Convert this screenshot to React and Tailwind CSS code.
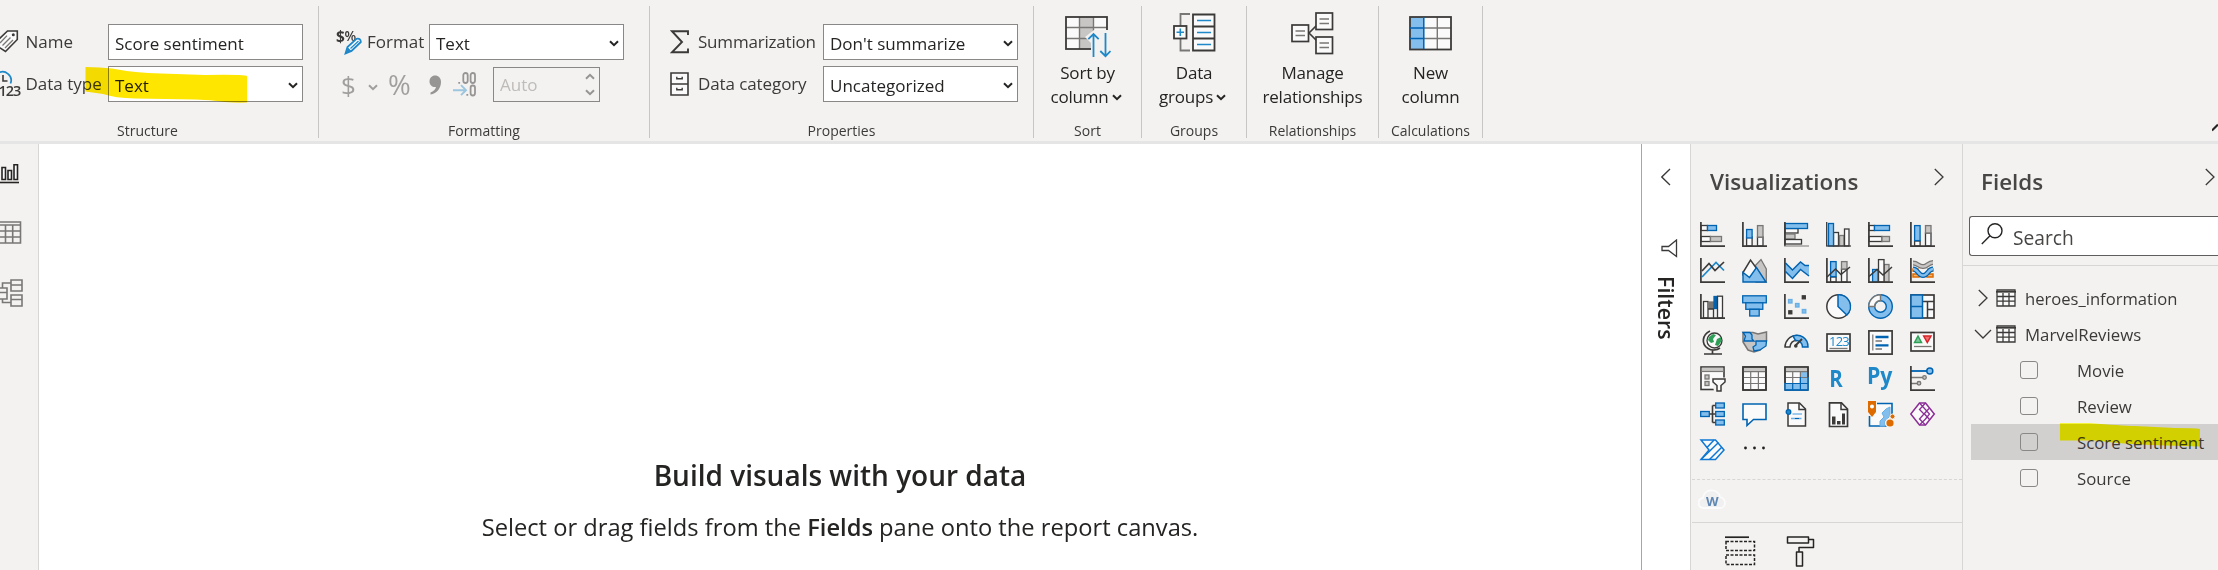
import React from "react";

const DK = "#3b3a39";
const BF = "#83beec";
const BS = "#0063b1";
const GF = "#c8c6c4";
const GS = "#797775";
const W = "#fafafa";
const SKY = "#1e88c9";

/* ---------- small helpers ---------- */
const B = ({ x, y, w, h, f = W, s = DK, t = 1.3 }) => (
  <rect x={x} y={y} width={w} height={h} fill={f} stroke={s} strokeWidth={t} />
);
const L = ({ d, s = DK, t = 1.5, f = "none" }) => (
  <path d={d} stroke={s} strokeWidth={t} fill={f} />
);
const Axis = () => <L d="M.9 0V24.1H25" t={1.7} />;

const Chevron = ({ className = "" }) => (
  <svg className={className} width="10" height="7" viewBox="0 0 10 7">
    <path d="M1 1.2L5 5.2L9 1.2" fill="none" stroke="currentColor" strokeWidth="2" />
  </svg>
);

/* ---------- ribbon ---------- */
const Group = ({ label, width, children, labelClass = "" }) => (
  <section className={`mt-1.5 flex h-[132px] shrink-0 flex-col border-r border-[#c8c6c4] ${width}`}>
    <div className="h-[117px] shrink-0">{children}</div>
    <div className={`shrink-0 text-center text-[14px] leading-[15px] text-[#3b3a39] ${labelClass}`}>{label}</div>
  </section>
);

const Field = ({ text, arrow, width = "w-[195px]" }) => (
  <div className={`flex h-9 items-center justify-between border border-[#8a8886] bg-white pr-1 pl-1.5 pt-[3px] text-[17px] leading-[30px] tracking-normal text-[#252423] ${width}`}>
    <span>{text}</span>
    {arrow && <Chevron />}
  </div>
);

const BigButton = ({ icon, a, b, arrow }) => (
  <div className="flex flex-col items-center pt-1 text-[17px] leading-[24px] tracking-[-0.2px] text-[#252423]">
    <div className="flex h-[51px] items-start justify-center">{icon}</div>
    <span>{a}</span>
    <span className={`flex items-center gap-[3px] ${arrow ? "pr-[3px]" : ""}`}>
      {b}
      {arrow && <Chevron />}
    </span>
  </div>
);

const TagIcon = () => (
  <svg width="19" height="24" viewBox="0 0 19 24">
    <path d="M-6 14L7.5 1H17.3V9.5L5.5 21.5Z" fill={W} stroke={DK} strokeWidth="1.6" />
    <circle cx="13.3" cy="4.8" r="1.5" fill={DK} />
    <path d="M0 13L7 5.6M2.5 15.5L10.5 7.5M5 18L13 10" stroke={GS} strokeWidth="1.3" />
  </svg>
);
const TypeIcon = () => (
  <svg width="20" height="26" viewBox="0 0 20 26" className="overflow-visible">
    <path d="M-2 2.2A8.5 8.5 0 0 1 10.5 12.5" fill="none" stroke={SKY} strokeWidth="1.7" />
    <path d="M3 4V10H7.5" fill="none" stroke={DK} strokeWidth="1.6" />
    <text x="-1.5" y="24.5" fontSize="14.5" fontWeight="600" letterSpacing="-1.1" fill={DK}>123</text>
  </svg>
);
const FormatIcon = () => (
  <svg width="26" height="26" viewBox="0 0 26 26" className="overflow-visible">
    <text x="0" y="13" fontSize="15.5" fontWeight="700" letterSpacing="-.6" fill={DK}>$</text>
    <text x="8.5" y="12" fontSize="13.5" fontWeight="600" fill={DK}>%</text>
    <path d="M9.5 24.5L11.5 18L20.5 9.8Q24.8 9 24.8 13L15.5 22Z" fill="#fff" stroke={SKY} strokeWidth="1.8" />
    <path d="M12 18.5L15.5 22L9.5 24.5Z" fill={SKY} />
    <path d="M14.5 19.5L22.5 12" stroke={SKY} strokeWidth="1.2" />
  </svg>
);
const SigmaIcon = () => (
  <svg width="19" height="24" viewBox="0 0 19 24">
    <path d="M18 5V1.2H2L12 12L2 22.3H18V18.5" fill="none" stroke={DK} strokeWidth="1.9" />
  </svg>
);
const DrawerIcon = () => (
  <svg width="19" height="24" viewBox="0 0 19 24">
    <path d="M1 1H18V23H1ZM1 12H18" fill={W} stroke={DK} strokeWidth="1.6" />
    <path d="M6.8 4.8V6.8H12.2V4.8M6.8 15.8V17.8H12.2V15.8" fill="none" stroke={DK} strokeWidth="1.4" />
  </svg>
);
const DecimalIcon = () => (
  <svg width="24" height="26" viewBox="0 0 24 26" className="overflow-visible">
    <g fill="none" stroke="#979593" strokeWidth="1.8">
      <rect x="10.3" y="1" width="4.4" height="10" rx="2.2" />
      <rect x="17.6" y="1" width="4.4" height="10" rx="2.2" />
      <rect x="17.6" y="13.5" width="4.4" height="10" rx="2.2" />
    </g>
    <path d="M5.3 10h1.8v1.8H5.3zM13.4 22h1.8v1.8h-1.8z" fill="#979593" />
    <path d="M0 18.2H12.5M8 13.2L13 18.2L8 23.2" fill="none" stroke="#9cc5de" strokeWidth="1.9" />
  </svg>
);

const SortIcon = () => (
  <svg width="46" height="42" viewBox="0 0 46 42" className="mt-1.5">
    <rect x="1" y="1" width="41" height="32" fill={W} />
    <rect x="14.5" y="1" width="14" height="32" fill={GF} />
    <path d="M1 11.5H42M1 22.5H42M14.5 1V33M28.5 1V33" stroke={GS} strokeWidth="1.4" />
    <rect x="1" y="1" width="41" height="32" fill="none" stroke={DK} strokeWidth="1.8" />
    <path d="M20 21L29 14H46V42H26V27Z" fill="#f3f2f1" />
    <path d="M28.5 41V18M23.3 23.2L28.5 18L33.7 23.2M40.5 17V40M35.3 35L40.5 40.2L45.5 35" fill="none" stroke={SKY} strokeWidth="1.8" />
  </svg>
);
const GroupsIcon = () => (
  <svg width="43" height="39" viewBox="0 0 43 39" className="mt-[3px]">
    <path d="M17 1H7.5V13M7.5 26V37.5H17" fill="none" stroke={GS} strokeWidth="1.8" />
    <path d="M20 1.5H41.5V37.5H20ZM20 13.5H41.5M20 25.5H41.5" fill={W} stroke={DK} strokeWidth="1.8" />
    <path d="M24 7.5H38M24 19.5H38M24 31.5H38" stroke={SKY} strokeWidth="1.6" />
    <rect x="1" y="13" width="12.5" height="12.5" fill={W} stroke={DK} strokeWidth="1.8" />
    <path d="M3.5 19.3H11M7.3 15.5V23" stroke={SKY} strokeWidth="1.6" />
  </svg>
);
const RelIcon = () => (
  <svg width="43" height="43" viewBox="0 0 43 43" className="mt-0.5">
    <path d="M18 21L26 13M18 21L26 29" stroke={DK} strokeWidth="1.7" />
    <rect x="1" y="13" width="16.5" height="16.5" fill={W} stroke={DK} strokeWidth="1.7" />
    <rect x="25" y="1" width="16.5" height="16.5" fill={W} stroke={DK} strokeWidth="1.7" />
    <rect x="25" y="25" width="16.5" height="16.5" fill={W} stroke={DK} strokeWidth="1.7" />
    <path d="M4.5 19H14M4.5 23.5H14M28.5 7H38M28.5 11.5H38M28.5 31H38M28.5 35.5H38" stroke={GS} strokeWidth="1.4" />
  </svg>
);
const ColumnIcon = () => (
  <svg width="43" height="35" viewBox="0 0 43 35" className="mt-1.5">
    <rect x="1" y="1" width="41" height="32.5" fill={W} />
    <rect x="1" y="1" width="14" height="32.5" fill={BF} />
    <path d="M15 12H42M15 22.5H42M28.3 1V33" stroke={GS} strokeWidth="1.4" />
    <rect x="1" y="1" width="41" height="32.5" fill="none" stroke={DK} strokeWidth="1.8" />
    <path d="M1 12H15M1 22.5H15M14.8 1V33" stroke={BS} strokeWidth="1.5" />
  </svg>
);

const Ribbon = () => (
  <header className="flex h-36 shrink-0 border-b-[3px] border-[#e5e5e5] bg-[#f3f2f1]">
    <Group label="Structure" width="w-[319px]" labelClass="pr-[23px]">
      <div className="flex flex-col gap-1.5 pt-[18px] text-[17px] text-[#3b3a39]">
        <div className="flex items-center">
          <div className="w-[25.5px]"><TagIcon /></div>
          <div className="w-[82.5px]">Name</div>
          <Field text="Score sentiment" />
        </div>
        <div className="relative flex items-center">
          <div className="w-[25.5px]"><TypeIcon /></div>
          <div className="w-[82.5px] whitespace-nowrap">Data type</div>
          <Field text="Text" arrow />
          <svg className="absolute top-0 left-[85px] mix-blend-multiply" width="163" height="38" viewBox="0 0 163 38">
            <path d="M.5 1Q15 1 27 2.5Q50 7 76 7.5L120 9Q140 8.500 154 9Q162 9 162 10.500V36.500Q152 37 140 36Q125 33.500 110 33.500L50 32.500Q30 32 18 28L.5 25.500Z" fill="#ffe600" />
          </svg>
        </div>
      </div>
    </Group>

    <Group label="Formatting" width="w-[331px]">
      <div className="pt-[18px] pl-[17px] text-[17px] text-[#3b3a39]">
        <div className="flex items-center">
          <div className="w-[31px]"><FormatIcon /></div>
          <div className="w-[62px]">Format</div>
          <Field text="Text" arrow />
        </div>
        <div className="mt-[7px] flex h-[35px] items-center text-[#a19f9d]">
          <span className="w-[32px] pl-[5px] text-[26px] leading-[34px]">$</span>
          <Chevron className="mt-1.5" />
          <span className="ml-2.5 w-[41px] text-[27.5px] leading-[34px] tracking-[-0.5px]">%</span>
          <svg width="13" height="20" viewBox="0 0 13 20">
            <path d="M6 .5C9.500 .5 12 3 12 7C12 13 8 18.500 1.500 19.500V17.500C4.500 16.500 6.500 14.500 7 12C3.500 12.500 .5 10 .5 6.500C.5 3 3 .5 6 .5Z" fill="#979593" />
          </svg>
          <div className="ml-[11px]"><DecimalIcon /></div>
          <div className="ml-4 flex h-[35px] w-[107px] items-center justify-between border border-[#8a8886] pr-1 pl-1.5 text-[17px] text-[#bebbb8]">
            <span>Auto</span>
            <span className="flex flex-col gap-[9px] text-[#979593]">
              <Chevron className="rotate-180" />
              <Chevron />
            </span>
          </div>
        </div>
      </div>
    </Group>

    <Group label="Properties" width="w-[384px]">
      <div className="flex flex-col gap-1.5 pt-[18px] pl-5 text-[17px] tracking-[-0.1px] text-[#3b3a39]">
        <div className="flex items-center">
          <div className="w-[28px]"><SigmaIcon /></div>
          <div className="w-[125px] tracking-[-0.2px]">Summarization</div>
          <Field text="Don't summarize" arrow />
        </div>
        <div className="flex items-center">
          <div className="w-[28px]"><DrawerIcon /></div>
          <div className="w-[125px]">Data category</div>
          <Field text="Uncategorized" arrow />
        </div>
      </div>
    </Group>

    <Group label="Sort" width="w-[108px]"><BigButton icon={<SortIcon />} a="Sort by" b="column" arrow /></Group>
    <Group label="Groups" width="w-[105px]"><BigButton icon={<GroupsIcon />} a="Data" b="groups" arrow /></Group>
    <Group label="Relationships" width="w-[132px]"><BigButton icon={<RelIcon />} a="Manage" b="relationships" /></Group>
    <Group label="Calculations" width="w-[104px]"><BigButton icon={<ColumnIcon />} a="New" b="column" /></Group>

    <svg className="mt-[123px] ml-auto" width="6" height="9" viewBox="0 0 6 9">
      <path d="M0 7.500L6 1.500" stroke="#252423" strokeWidth="2" />
    </svg>
  </header>
);

/* ---------- left rail ---------- */
const Rail = () => (
  <nav className="flex w-[39px] shrink-0 flex-col border-r border-[#d8d6d4] bg-[#f3f2f1] pt-5">
    <svg width="24" height="20" viewBox="0 0 24 20">
      <path d="M2 3.500H5.500V15.500H2ZM8 6.500H11.500V15.500H8ZM14 .8H17.500V15.500H14Z" fill={W} stroke="#252423" strokeWidth="1.6" />
      <path d="M0 18.500H19" stroke="#252423" strokeWidth="1.6" />
    </svg>
    <svg className="mt-[37px]" width="24" height="23" viewBox="0 0 24 23">
      <path d="M-2 1H20.500V22H-2ZM-2 4H20.500M-2 10H20.500M-2 16H20.500M5.500 4V22M12.700 4V22" fill="none" stroke={GS} strokeWidth="1.6" />
    </svg>
    <svg className="mt-[35px]" width="24" height="28" viewBox="0 0 24 28">
      <path d="M11 1H22V12H11ZM11 6H22M11 16H22V27H11ZM11 20.500H22M-2 9H7V20H-2ZM-2 13.500H7M2.500 9V4H11M2.500 20V23.500H11" fill="none" stroke={GS} strokeWidth="1.6" />
    </svg>
  </nav>
);

/* ---------- visual gallery ---------- */
const visuals = [
  <><B x={1} y={3.5} w={6.5} h={5} /><B x={7.5} y={3.5} w={9} h={5} f={BF} s={BS} /><B x={1} y={14.5} w={9.5} h={5} /><B x={10.5} y={14.5} w={11} h={5} f={GF} s={GS} /><Axis /></>,
  <><B x={4.6} y={15} w={5.5} h={9} /><B x={4.6} y={7.5} w={5.5} h={8.500} f={BF} s={BS} /><B x={15.5} y={15} w={5.5} h={9} /><B x={15.5} y={3.6} w={5.5} h={11.500} f={GF} s={GS} /><Axis /></>,
  <><B x={1} y={6.5} w={13} h={4.500} /><B x={1} y={12} w={10} h={5} f={GF} s={GS} /><B x={1} y={17.5} w={16.500} h={4.500} /><B x={1} y={1.5} w={22.500} h={5} f={BF} s={BS} /><L d="M.9 0V24.100" t={1.700} /><L d="M0 24H25" t={1} s={GS} /></>,
  <><B x={7.5} y={10.5} w={5} h={13.500} /><B x={13.500} y={13.500} w={4.500} h={10.500} f={GF} s={GS} /><B x={18.500} y={7} w={4.500} h={17} /><B x={2.500} y={1.5} w={5} h={22.500} f={BF} s={BS} /><L d="M.7 0V24" t={1.300} /><L d="M0 24H25" t={1.200} /></>,
  <><B x={1} y={3.5} w={5.5} h={5} /><B x={6.5} y={3.5} w={15} h={5} f={BF} s={BS} /><B x={1} y={14.5} w={13} h={5} /><B x={14} y={14.5} w={7.500} h={5} f={GF} s={GS} /><Axis /></>,
  <><B x={4.600} y={19} w={5.500} h={5} /><B x={4.600} y={3.600} w={5.500} h={15} f={BF} s={BS} /><B x={15.500} y={11} w={5.500} h={13} /><B x={15.500} y={3.600} w={5.500} h={7.400} f={GF} s={GS} /><Axis /></>,
  <><L d="M2 19L16 4.500L24 12.500" s={SKY} t={1.700} /><L d="M2 13L9 5.500L15 12.500L24 4" t={1.700} /><Axis /></>,
  <><L d="M12 9L19 1.500L24.300 11V24H14Z" f={GF} s={GS} t={1.300} /><L d="M1 17V14.500L8.500 2L15 11L8 20Z" f={W} t={1.500} /><L d="M1 24V14.500L7.500 19.500L14.500 9.500L24 24Z" f={BF} s={BS} t={1.400} /></>,
  <><L d="M1.500 4.500L9 12L16.500 4L21 7.500H25V18L16.500 11L9 20L1.500 13.500Z" f={BF} s="none" /><L d="M1.500 5L8.500 12L16.500 4L21 7.500H25M1.500 13.500L8.500 20.500L16.500 11.500L25 18" s={BS} t={1.500} /><Axis /></>,
  <><B x={4.600} y={19} w={5.500} h={5} /><B x={4.600} y={3.600} w={5.500} h={15} f={BF} s={BS} /><B x={15.500} y={11} w={5.500} h={13} /><B x={15.500} y={3.600} w={5.500} h={7.400} f={GF} s={GS} /><L d="M1 19L9.500 11L15 16.500L24 9" /><Axis /></>,
  <><B x={4.600} y={11.500} w={5.500} h={12.500} f={BF} s={BS} /><B x={16} y={6.500} w={5} h={17.500} f={GF} s={GS} /><B x={10.500} y={1.600} w={5.500} h={22.400} /><L d="M1 18.500L9 11.500L15 17L24 9" /><Axis /></>,
  <><L d="M3 16H9V19H3ZM17 16H23V19H17ZM3 11H8V13H3ZM18 11H23V13H18Z" f="#f7b26a" s="#dd6b00" t={1.500} /><L d="M3 5C8 5 9 9 13 8.500C17 9 18 4.500 23 4.500" s={GS} t={5} /><L d="M3 5C8 5 9 9 13 8.500C17 9 18 4.500 23 4.500" s={GF} t={2.600} /><L d="M3 11C8 11 8 17.500 13 17.500C18 17.500 18 11 23 11" s={BS} t={5} /><L d="M3 11C8 11 8 17.500 13 17.500C18 17.500 18 11 23 11" s={BF} t={2.400} /><Axis /></>,
  <><B x={3.500} y={7.500} w={4.500} h={16.500} /><B x={9.500} y={8} w={4} h={6.500} f={GS} s={GS} /><B x={14} y={2.500} w={3} h={12} f={BS} s={BS} /><B x={17.500} y={2.200} w={5} h={21.800} /><L d="M8 15H13.500V24" t={1.300} /><Axis /></>,
  <><B x={.7} y={1.800} w={23.600} h={7} f={BF} s={BS} /><B x={3.800} y={8.800} w={17} h={6.500} f={BF} s={BS} /><B x={7.700} y={15.300} w={9.500} h={6.700} f={BF} s={BS} /></>,
  <><B x={4.500} y={5.500} w={3.500} h={3.500} f={BF} s="#69afe5" /><B x={11.500} y={9.500} w={3.500} h={3.500} f={BF} s="#69afe5" /><B x={18.300} y={15.500} w={3.500} h={3.500} f={BF} s="#69afe5" /><B x={18.300} y={1.800} w={3} h={3} f={DK} /><B x={4.800} y={16.800} w={3} h={3} f={DK} /><Axis /></>,
  <><circle cx="12.500" cy="12.500" r="11.700" fill={W} stroke={DK} strokeWidth="1.500" /><L d="M12 .8A11.700 11.700 0 0 1 20.800 21L12 12.500Z" f={BF} s={BS} /></>,
  <><circle cx="12.500" cy="12.500" r="8.800" fill="none" stroke={BS} strokeWidth="7.400" /><circle cx="12.500" cy="12.500" r="8.800" fill="none" stroke={BF} strokeWidth="4.600" /><L d="M.8 12.500A11.700 11.700 0 0 1 12.500 .8V6.500A6 6 0 0 0 6.500 12.500Z" f={W} s={GS} t={1.400} /></>,
  <><B x={1} y={1} w={23} h={23} t={1.700} /><L d="M12.500 7.500H24M17.500 7.500V24M17.500 15.500H24" /><L d="M1 1H12.500V24H1ZM1 12.500H12.500" f={BF} s={BS} /></>,
  <><circle cx="14.500" cy="10.500" r="7.500" fill={W} stroke={DK} strokeWidth="1.300" /><L d="M9 7L13 4L16 5L13 9L14 12L11 13L8 10ZM17 9L21 7V12L18 16L15 15Z" f="#2f9e57" s="none" /><L d="M10 1C2 5 1 14 8 18.500C12 21 17 20 20 18M12.500 20V24M4 24H22" t={1.700} /></>,
  <><L d="M1 2.500H11L16 4L24.500 2V11L18 20L12 22L6 20L1 12Z" f={GF} s={GS} /><L d="M1 2.500H8L10 5V9L12 11H2L3.500 6ZM14 11L24.500 11L24 16L18 20L12 21L11 17L14 15Z" f={BF} s={BS} t={1.300} /></>,
  <><L d="M1 17C1 11 6 5.500 12.500 5.500V10.500C9 10.500 6.500 13 6 17Z" f={W} /><L d="M9 6.200C16 3.500 24 8 24 17H18.500C18.500 13 15 10 11.500 10.500Z" f={BF} s={BS} /><L d="M18 9L11 16" t={2} /><circle cx="11.800" cy="16" r="1.800" fill={DK} /></>,
  <><B x={1} y={4} w={23} h={17} t={1.700} /><text x="3" y="15.700" fontSize="13" letterSpacing="-.8" fill={SKY}>123</text><L d="M3.500 18.500H21.500" s={GS} t={1.300} /></>,
  <><B x={.9} y={.9} w={23.200} h={23.200} t={1.700} /><L d="M4.800 4.500V20.500" s={GS} t={1.200} /><L d="M7.500 7H20.500M7.500 15.300H20.500" s={BS} t={2.300} /><L d="M7.500 11H14M7.500 19H14" s={GS} t={1.300} /></>,
  <><B x={1} y={2.500} w={23} h={18.500} t={1.700} /><L d="M4.500 12.500L8 6L11.500 12.500Z" f="#7cc79a" s="#2f9e57" /><L d="M13.700 6H21L17.300 12.500Z" f="#f26d6d" s="#d3242a" /><L d="M4 16.500H21.500" s={GS} t={1.300} /></>,
  <><B x={1} y={1} w={23} h={22.500} t={1.600} /><L d="M1.800 3.500H23.200" s={GF} t={3.600} /><L d="M1 5.500H24" s={GS} t={1.200} /><B x={5} y={9} w={4} h={4} s={GS} f={GF} /><B x={5} y={15.500} w={4} h={4} s={GS} f={GF} /><path d="M11.500 11.500H27V25.500H14Z" fill="#f3f2f1" /><L d="M13 13H25V16L21 19.500V25H17V19.500L13 16Z" f={W} /></>,
  <><B x={1} y={1} w={23} h={23} t={1.700} /><L d="M1.800 3.500H23.200" s={GF} t={3.400} /><L d="M1 5.700H24M1 11.500H24M1 17.500H24M8.700 6V24M16.400 6V24" s={GS} t={1.200} /><L d="M1 1H24V24H1Z" /></>,
  <><B x={1} y={1} w={23} h={23} /><L d="M1.800 3.500H23.200" s={GF} t={3.400} /><path d="M16.400 6H24V24H1V17.500H8.700H16.400Z" fill={BF} /><L d="M1 5.700H24M1 11.500H24M8.700 6V17M16.400 6V17" s={GS} t={1.200} /><L d="M1 17.500H24M8.700 17.500V24M16.400 11V24M1 24H24" s={BS} t={1.200} /><L d="M1 17V1H24V11" t={1.700} /><L d="M24 11V24H1V17" s={BS} /></>,
  <text x="3.300" y="20.800" fontSize="22.500" fontWeight="700" fill={SKY} textLength="13.500" lengthAdjust="spacingAndGlyphs">R</text>,
  <text x="-1" y="18" fontSize="22.500" fontWeight="700" fill={SKY} textLength="25.500" lengthAdjust="spacingAndGlyphs">Py</text>,
  <><L d="M1 5H17" s={BS} t={1.800} /><L d="M1 11.500H13M1 17.500H7" s={GS} t={1.500} /><circle cx="19.800" cy="5" r="3" fill={BF} stroke={BS} strokeWidth="1.500" /><circle cx="14.500" cy="11.500" r="1.800" fill={GF} stroke={GS} strokeWidth="1.300" /><circle cx="9" cy="17.300" r="1.800" fill={GF} stroke={GS} strokeWidth="1.300" /><Axis /></>,
  <><L d="M9 12H16M12.500 3.500V20.500M12.500 3.500H16M12.500 20.500H16" t={1.600} /><B x={.7} y={9.500} w={8.600} h={5} f={BF} s={BS} /><B x={15.700} y={1} w={8.600} h={5} f={BF} s={BS} /><B x={15.700} y={9.500} w={8.600} h={5} f={BF} s={BS} /><B x={15.700} y={18} w={8.600} h={5} f={BF} s={BS} /></>,
  <L d="M1 2H24V17.500H11.500L5 23.500V17.500H1Z" f={W} s={BS} t={1.600} />,
  <><L d="M4 1H15.500L21.500 7V24H4Z" f={W} /><L d="M15 1V7.500H21.500" /><L d="M8.500 12H18" s="#69afe5" t={1.300} /><L d="M11 16.500H15" s={BS} t={1.300} /><L d="M7 16.500H11M15 16.500H17.500" s="#69afe5" t={1.300} /><circle cx="4.500" cy="10" r="2.300" fill={SKY} stroke={BS} strokeWidth="1.300" /></>,
  <><L d="M3.500 .9H15.500L21.500 7V24.500H3.500Z" f={W} t={1.700} /><L d="M15 1V7.500H21.500" /><path d="M6 14.500H9.500V22.500H6ZM11 19H14.500V22.500H11ZM16 11.500H19V22.500H16Z" fill={DK} /></>,
  <><L d="M1.500 14V24H24V1.500H9" f={W} s={BS} t={1.600} /><path d="M12 24V19L16 15L14 11L18 7L22 5V14L17 19V24Z" fill={BF} stroke="#69afe5" /><path d="M0 -1H8V10L4 15L0 10Z" fill="#dd6b00" /><circle cx="4" cy="4.500" r="2" fill="#fff" /><circle cx="22" cy="21" r="5" fill="#f3f2f1" /><circle cx="22" cy="21" r="3.600" fill="#dd6b00" /><circle cx="24.500" cy="14.500" r="2.500" fill="#dd6b00" stroke="#f3f2f1" /></>,
  <><L d="M9.500 1L.8 12L9.500 23H15.500L24.300 12L15.500 1Z" f={W} s="#8a2d96" /><L d="M9.500 1L19.500 12L15.500 17L9.500 23M15.500 1L9.500 7.500L14 12L9.500 17L15.500 23M14 12L19 6.500M14.500 12L19.500 17.500" s="#8a2d96" t={1.300} /></>,
  <><L d="M1 2H15.500L24 12L15.500 21.500H1L9 12Z" f={W} s="#0f78d4" t={1.500} /><L d="M7 9.500L14 2M1 21.500L18.500 4.500M9.500 21.500L22 9" s="#0f78d4" t={1.500} /></>,
  <g fill="#201f1e"><circle cx="3.500" cy="10" r="1.400" /><circle cx="12.500" cy="10" r="1.400" /><circle cx="21.500" cy="10" r="1.400" /></g>,
];

const ThinChevron = ({ d, w = 10, h = 18, s = "#3b3a39" }) => (
  <svg width={w} height={h} viewBox={`0 0 ${w} ${h}`}>
    <path d={d} fill="none" stroke={s} strokeWidth="1.300" />
  </svg>
);

const Visualizations = () => (
  <aside className="flex w-[272px] shrink-0 flex-col border-l border-[#d8d6d4] bg-[#f3f2f1]">
    <div className="flex h-[78px] items-start justify-between pt-[22px] pr-[18px] pl-[19px]">
      <h2 className="text-[22.4px] leading-[32px] font-semibold text-[#484644]">Visualizations</h2>
      <div className="pt-0.5"><ThinChevron d="M.8 1L9 9L.8 17" /></div>
    </div>
    <div className="grid grid-cols-[repeat(6,42px)] auto-rows-[36px] pl-[9px]">
      {visuals.map((v, i) => (
        <svg key={i} width="25" height="25" viewBox="0 0 25 25" className="overflow-visible">{v}</svg>
      ))}
    </div>
    <div className="mt-[5px] ml-px h-[43px] border-t border-dashed border-[#d8d6d4] pt-2 pl-1.5">
      <svg width="28" height="22" viewBox="0 0 28 22">
        <path d="M6 20C-1 20 -1 11 5 10C6 0 20 0 22 9C29 11 28 20 22 20Z" fill="#f0f0f0" stroke="#fbfbfb" strokeWidth="1.800" />
        <text x="8" y="18" fontSize="13" fontWeight="700" fill="#5f87b3">W</text>
      </svg>
    </div>
    <div className="ml-px flex items-start gap-[30px] border-t border-[#d8d6d4] pt-[13px] pl-[33px]">
      <svg width="31" height="31" viewBox="0 0 31 31">
        <path d="M0 1.200H24" stroke="#252423" strokeWidth="1.700" />
        <path d="M1 5.500H29.500V14.500H1ZM1 19H29.500V28.500H1Z" fill="none" stroke="#252423" strokeWidth="1.500" strokeDasharray="3 1.500" />
      </svg>
      <svg width="29" height="31" viewBox="0 0 29 31">
        <path d="M1.500 1H22.500V7H1.500ZM22.500 3.500H27.500V11.500H13V16M10.500 16H16.500V30H10.500Z" fill="none" stroke="#252423" strokeWidth="1.500" strokeLinejoin="round" />
      </svg>
    </div>
  </aside>
);

/* ---------- fields ---------- */
const TableIcon = () => (
  <svg width="20" height="18" viewBox="0 0 20 18">
    <path d="M1 1H19V17H1ZM1 7.500H19M1 12.200H19M7 4V17M13 4V17" fill={W} stroke={DK} strokeWidth="1.300" />
    <path d="M0 2.800H20" stroke={DK} strokeWidth="1.700" />
  </svg>
);

const Column = ({ name, selected }) => (
  <div className={`ml-2 flex h-9 items-center pl-[49px] ${selected ? "relative bg-[#d2d0ce]" : ""}`}>
    <span className="size-[18px] rounded-[3px] border border-[#8a8886]" />
    <span className="pt-0.5 pl-[39px] whitespace-nowrap">{name}</span>
    {selected && (
      <svg className="absolute -top-1 left-[89px] mix-blend-multiply" width="141" height="28" viewBox="0 0 141 28">
        <path d="M0 3.200H30Q60 5.500 75 6L115 8Q135 8 140 9V26.500L90 25Q60 23.500 35 20.500H0Z" fill="#ffff00" />
      </svg>
    )}
  </div>
);

const Fields = () => (
  <aside className="w-[256px] shrink-0 border-l border-[#d8d6d4] bg-[#f3f2f1] text-[16.8px] text-[#3b3a39]">
    <div className="flex h-[72px] items-start justify-between pt-[22px] pr-[3px] pl-[18px]">
      <h2 className="text-[22.4px] leading-[32px] font-semibold text-[#484644]">Fields</h2>
      <div className="pt-0.5"><ThinChevron d="M.8 1L9 9L.8 17" /></div>
    </div>
    <div className="ml-1.5 flex h-10 items-center rounded-l-[3px] border border-r-0 border-[#605e5c] bg-white pl-[11px] text-[19.2px] text-[#484644]">
      <svg className="-mt-1" width="22" height="22" viewBox="0 0 22 22">
        <circle cx="14" cy="7.800" r="7" fill="none" stroke="#252423" strokeWidth="1.400" />
        <path d="M9 12.800L.8 21" stroke="#252423" strokeWidth="1.400" />
      </svg>
      <span className="pt-1 pl-[10px]">Search</span>
    </div>
    <div className="mt-[9px] h-[15px] border-t border-[#d8d6d4]" />
    <div className="flex h-9 items-center pl-[15px]">
      <ThinChevron d="M.8 1L9 9L.8 17" />
      <div className="ml-2"><TableIcon /></div>
      <span className="pt-0.5 pl-[9px] text-[16.6px]">heroes_information</span>
    </div>
    <div className="flex h-9 items-center pl-[11px]">
      <ThinChevron d="M1 1L9 9L17 1" w={18} h={10} />
      <div className="ml-1"><TableIcon /></div>
      <span className="pt-0.5 pl-[9px]">MarvelReviews</span>
    </div>
    <Column name="Movie" />
    <Column name="Review" />
    <Column name="Score sentiment" selected />
    <Column name="Source" />
  </aside>
);

export default function App() {
  return (
    <div className="flex h-[570px] w-[2218px] flex-col overflow-hidden bg-white font-['Open_Sans','Noto_Sans',sans-serif]">
      <Ribbon />
      <div className="flex min-h-0 flex-1">
        <Rail />
        <main className="flex flex-1 flex-col items-center pt-[311px] text-[#252423]">
          <h1 className="text-[28px] leading-[40px] font-semibold">Build visuals with your data</h1>
          <p className="mt-3.5 text-[23.7px] leading-[36px]">
            Select or drag fields from the <span className="font-semibold">Fields</span> pane onto the report canvas.
          </p>
        </main>
        <aside className="flex w-[49px] shrink-0 flex-col items-center border-l border-[#a6a6a6] bg-white pt-6">
          <ThinChevron d="M9 1L.8 9L9 17" />
          <svg className="mt-[53px] ml-[7px]" width="17" height="19" viewBox="0 0 17 19">
            <path d="M15.500 1V17.500L7.500 11.500H1V7.500H7.500Z" fill="none" stroke="#3b3a39" strokeWidth="1.300" />
          </svg>
          <h2 className="mt-[18px] text-[21.4px] leading-[28px] font-semibold text-[#252423] [writing-mode:vertical-rl]">Filters</h2>
        </aside>
        <Visualizations />
        <Fields />
      </div>
    </div>
  );
}
